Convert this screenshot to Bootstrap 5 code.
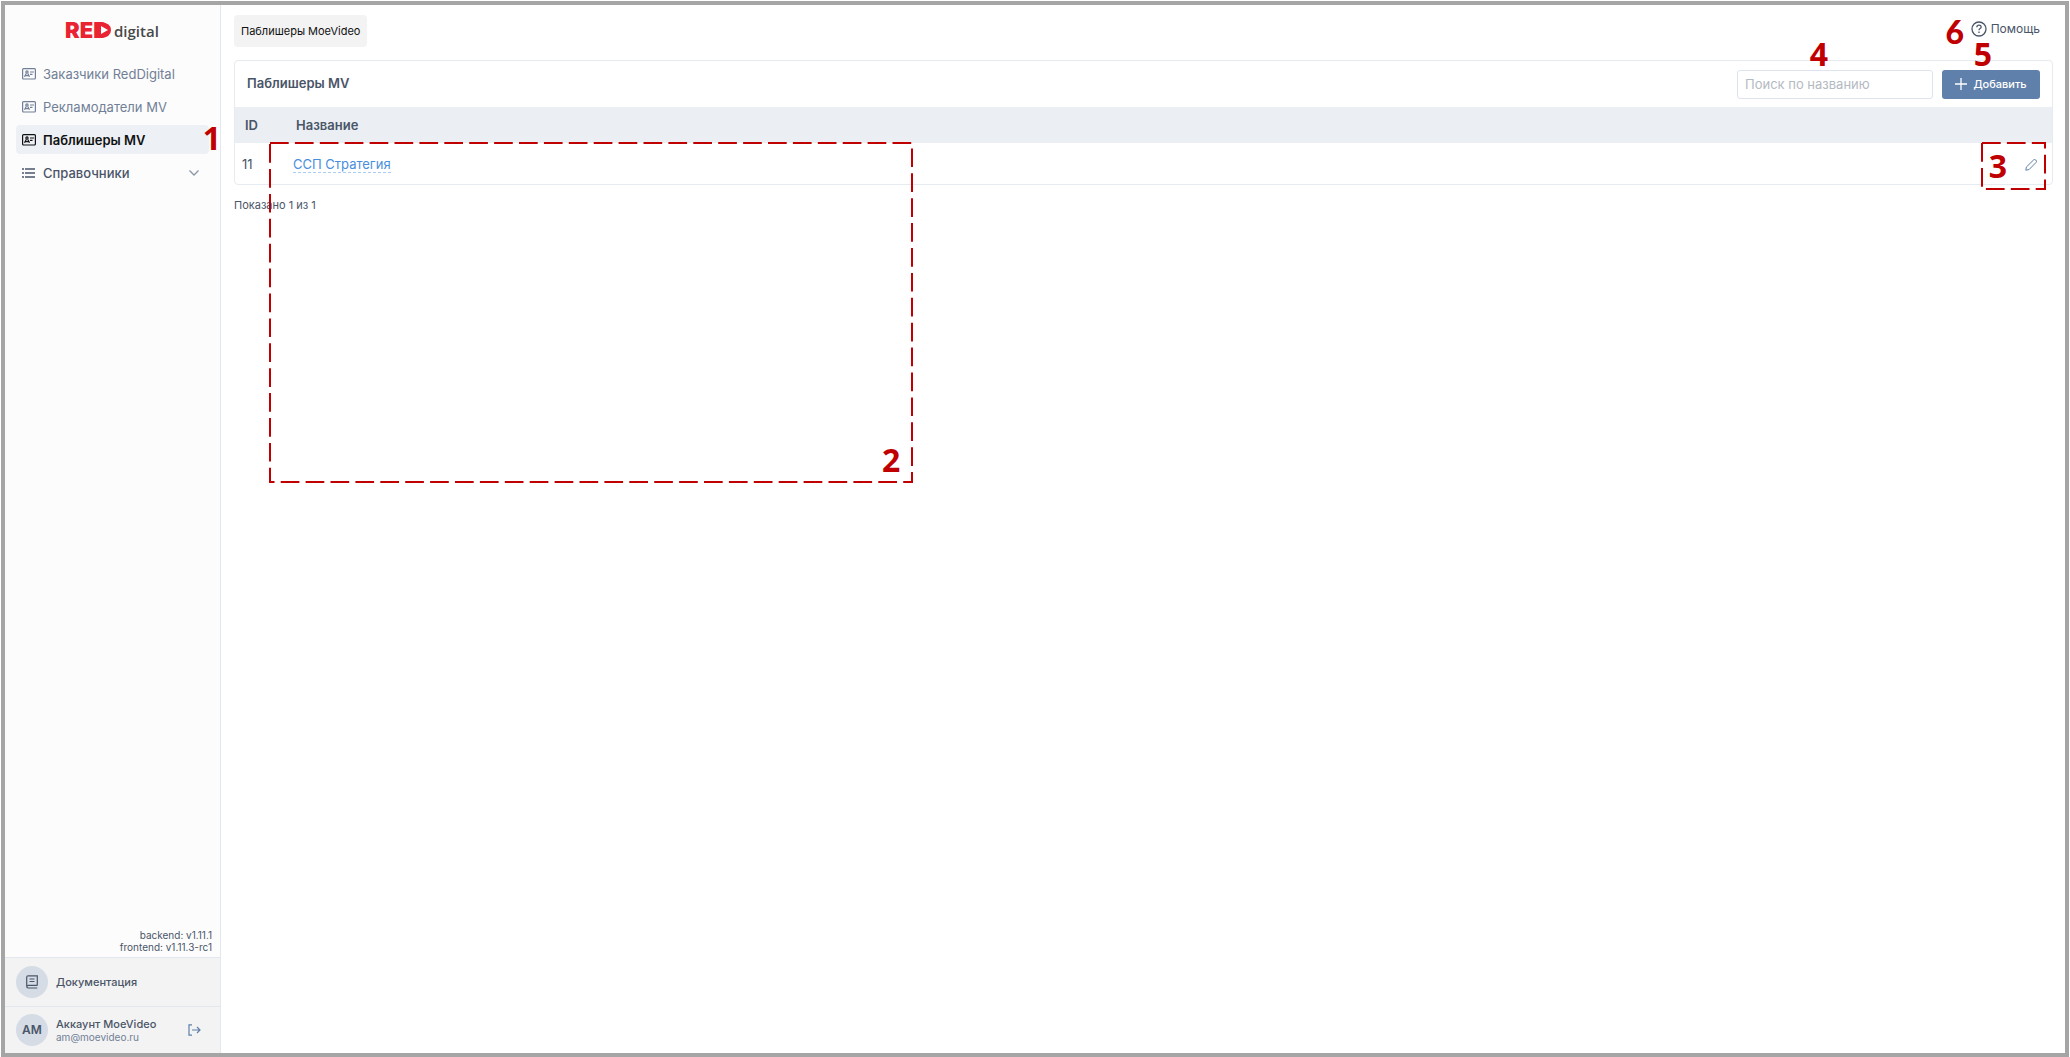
<!DOCTYPE html>
<html lang="ru">
<head>
<meta charset="utf-8">
<meta name="viewport" content="width=device-width, initial-scale=1">
<title>Паблишеры MV</title>
<link href="https://cdn.jsdelivr.net/npm/bootstrap@5.3.0/dist/css/bootstrap.min.css" rel="stylesheet">
<style>
body{font-family:Inter,"Liberation Sans",sans-serif;font-size:13px;line-height:20px;color:#4a5568;background:#fff;padding:1px 1px 0}
.frame{border:4px solid #a5a5a5;min-height:calc(100vh - 1px)}
.side{width:216px;background:#fcfcfc;border-right:1px solid #e2e8f0}
.logo{padding:8px 0 10px}
.menu{padding:0 11px;gap:4px}
.menu a{height:29px;padding:0 6px;gap:7px;border-radius:4px;color:#718096;text-decoration:none}
.menu a.active{background:#edf1f6;color:#111;font-weight:600}
.menu a.group{color:#4a5568;font-weight:500}
.vers{font-size:10px;line-height:12px;padding:0 8px 4px}
.foot{background:#f3f3f3;border-top:1px solid #e2e8f0;height:49px;padding:0 11px;gap:8px;color:#4a5568;text-decoration:none;font-size:11px;line-height:14px;font-weight:500}
.foot-user{height:47px}
.ava{width:32px;height:32px;background:#d5dce6;flex:none;font-weight:600;font-size:12px}
.mail{font-size:10px;line-height:12px;font-weight:400;color:#718096}
.main{padding:10px 12px 10px 13px}
.crumb{background:#f3f3f3;color:#111;border-radius:4px;font-size:11px;line-height:16px;padding:8px 7px}
.help{color:#4a5568;text-decoration:none;gap:4px;font-size:12px;padding:0 13px 4px 0}
.panel{border:1px solid #e6ebf2;border-radius:4px;margin-top:13px}
.panel-top{height:46px;padding:0 12px;gap:9px}
.title{font-size:13px;font-weight:600}
.search{width:196px;height:29px;font-size:13px;border:1px solid #dde4ed;border-radius:3px;padding:0 7px;color:#4a5568}
.search::placeholder{color:#b4bac2}
.add{height:29px;width:98px;background:#5f80ab;border:0;border-radius:3px;color:#fff;font-size:11px;font-weight:500;gap:6px}
.list{width:100%}
.list th{background:#ebeff4;height:36px;font-size:13px;font-weight:600;padding:0 10px}
.list td{height:41px;font-size:13px;padding:0 7px}
.list .idcol{width:51px}
.name{color:#4a8edc;text-decoration:none;border-bottom:1px dashed #a9cdf3}
.ico-btn{border:0;background:none;padding:0;color:#5f80ab}
.shown{font-size:11px;line-height:16px;padding-top:12px}
.note{position:absolute;font:700 32px/32px "Open Sans",sans-serif;color:#c00000;z-index:3;pointer-events:none}
.dash{position:absolute;z-index:2;pointer-events:none;overflow:visible;fill:none;stroke:#c00000;stroke-width:2;stroke-dasharray:18.7 6.2}
.n1{right:-12px;top:-3px}.n2{left:647px;top:383px}.n3{right:45px;top:89px}.n4{right:224px;top:-23px}.n5{right:60px;top:-23px}
.n6{right:89px;top:1px;font-family:Lato,sans-serif;font-weight:900}
.d2{left:35px;top:82px}.d3{right:7px;top:82px}
</style>
<script src="https://cdn.jsdelivr.net/npm/bootstrap@5.3.0/dist/js/bootstrap.bundle.min.js"></script>
</head>
<body>
<svg class="d-none"><symbol id="card-ico" viewBox="0 0 14 12"><g fill="none" stroke="currentColor" stroke-width="1.2"><rect x=".6" y=".6" width="12.8" height="10.4" rx="1"/><circle cx="5" cy="4" r="1.100"/><path d="M2.500 8.800 4.200 5.500M7.500 8.800 5.800 5.500M3.300 7.600h3.400M8 4h4M8 6.300h2.500"/></g></symbol></svg>
<div class="frame d-flex">
<aside class="side d-flex flex-column flex-shrink-0">
  <a class="logo d-flex justify-content-center" href="#" aria-label="RED digital">
    <svg width="100" height="36" viewBox="-2 0 100 36"><text x="0" y="25" font-family="Inter" font-weight="900" font-size="22" fill="#ea2333">RED</text><path d="M31 9h5q10 1 10 8t-10 8h-5z" fill="#ea2333"/><path d="m36 13 7 4-7 4z" fill="#fff"/><text x="49" y="24" font-family="Open Sans" font-weight="600" font-size="15" fill="#484848">digital</text></svg>
  </a>
  <nav class="menu d-flex flex-column">
    <a class="d-flex align-items-center" href="#"><svg width="14" height="12"><use href="#card-ico"/></svg>Заказчики RedDigital</a>
    <a class="d-flex align-items-center" href="#"><svg width="14" height="12"><use href="#card-ico"/></svg>Рекламодатели MV</a>
    <a class="d-flex align-items-center active position-relative" href="#"><svg width="14" height="12"><use href="#card-ico"/></svg>Паблишеры MV<span class="note n1">1</span></a>
    <a class="d-flex align-items-center group" href="#"><svg width="14" height="12" fill="none" stroke="currentColor" stroke-width="1.3"><path d="M0 2h2M0 6h2M0 10h2M3 2h10M3 6h10M3 10h10"/></svg>Справочники<svg class="ms-auto me-1" width="10" height="6" fill="none" stroke="#8b95a5" stroke-width="1.3"><path d="M.5.5 5 5 9.500.5"/></svg></a>
  </nav>
  <div class="vers text-end mt-auto">backend: v1.11.1<br>frontend: v1.11.3-rc1</div>
  <a class="foot d-flex align-items-center" href="#"><span class="ava rounded-circle d-flex align-items-center justify-content-center"><svg width="12" height="14" fill="none" stroke="currentColor" stroke-width="1.2"><path d="M11.300 10.500V.8H2.200Q.7.800.7 2.300v9q0 1.700 1.500 1.700h9.100M.7 11.800q.2-1.500 1.600-1.500h9M3.500 4h5M3.500 6.500h5"/></svg></span>Документация</a>
  <div class="foot foot-user d-flex align-items-center"><span class="ava rounded-circle d-flex align-items-center justify-content-center">AM</span><div>Аккаунт MoeVideo<div class="mail">am@moevideo.ru</div></div><button class="ico-btn ms-auto me-2 d-flex" aria-label="Выйти"><svg width="13" height="12" fill="none" stroke="currentColor" stroke-width="1.2"><path d="M4 .8H1v10.400h3M4 6h8M9 3l3 3-3 3"/></svg></button></div>
</aside>
<main class="main flex-grow-1">
  <header class="position-relative d-flex align-items-center justify-content-between"><span class="crumb">Паблишеры MoeVideo</span>
  <a class="help d-flex align-items-center" href="#"><svg width="16" height="16" fill="none" stroke="currentColor" stroke-width="1.3"><circle cx="8" cy="8" r="7"/><path d="M5.800 6.200q.2-2 2.200-2t2.200 1.800c0 1.600-2.200 1.500-2.200 3.200M8 10.500v1.500"/></svg>Помощь</a><span class="note n6">6</span></header>
  <section class="panel position-relative">
    <div class="panel-top d-flex align-items-center"><h1 class="title m-0 me-auto">Паблишеры MV</h1>
    <input class="search" type="search" placeholder="Поиск по названию" aria-label="Поиск по названию"><button class="add d-flex align-items-center justify-content-center"><svg width="12" height="12" stroke="#fff" stroke-width="1.3"><path d="M6 0v12M0 6h12"/></svg>Добавить</button></div>
    <table class="list"><thead><tr><th class="idcol">ID</th><th>Название</th><th></th></tr></thead>
    <tbody><tr><td>11</td><td><a class="name" href="#">ССП Стратегия</a></td><td class="text-end"><button class="ico-btn me-2" aria-label="Изменить"><svg width="12" height="12" fill="none" stroke="currentColor"><path d="M.8 11.200 1.400 8 8.500 1Q9.500 0 10.900 1.100T11 3.500L4 10.600z"/></svg></button></td></tr></tbody></table>
    <svg class="dash d2" width="642" height="339"><path d="M0 0H642V339H0z"/></svg>
    <svg class="dash d3" width="63" height="46"><path d="M0 0H63V46H0z"/></svg>
    <span class="note n2">2</span><span class="note n3">3</span><span class="note n4">4</span><span class="note n5">5</span>
  </section>
  <div class="shown">Показано 1 из 1</div>
</main>
</div>
</body>
</html>
